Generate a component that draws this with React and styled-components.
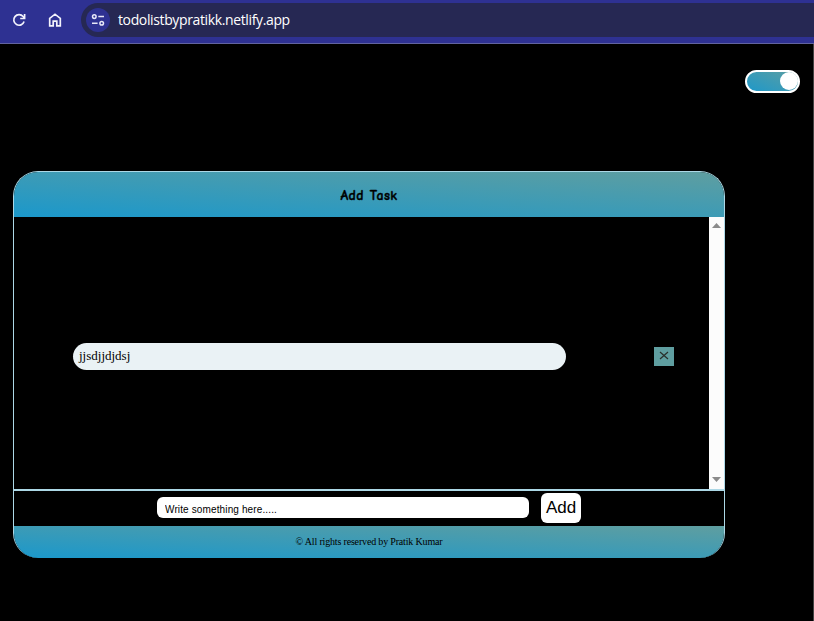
import React from "react";
import styled, { createGlobalStyle, css } from "styled-components";

const GlobalStyle = createGlobalStyle`
  * { box-sizing: border-box; }
  html, body { margin: 0; background: #000; overflow: hidden; }
`;

const gradient = css`
  background: linear-gradient(to top right, #1b98cb, #5f9ea0);
`;

const Page = styled.div`
  width: 814px;
  height: 621px;
  background: #000;
  display: flex;
  flex-direction: column;
`;

const BrowserBar = styled.header`
  height: 44px;
  flex: none;
  display: flex;
  align-items: flex-start;
  padding-top: 3px;
  background: #2e3192;
  border-bottom: 1px solid #62649f;
`;

const NavIcon = styled.svg`
  width: 16px;
  height: 16px;
  margin: 9px 0 0 ${(p) => p.$gap}px;
  flex: none;
  fill: none;
  stroke: #f3f3fc;
  stroke-width: 1.7;
`;

const AddressBar = styled.div`
  flex: 1;
  height: 34px;
  margin-left: 18px;
  padding-left: 5px;
  border-radius: 17px 0 0 17px;
  background: #262853;
  display: flex;
  align-items: center;
`;

const SiteInfo = styled.div`
  width: 24px;
  height: 24px;
  border-radius: 50%;
  background: #2e3192;
  display: flex;
  align-items: center;
  justify-content: center;
`;

const SiteIcon = styled.svg`
  width: 14px;
  height: 14px;
  fill: none;
  stroke: #e8e8f8;
  stroke-width: 1.5;
`;

const Url = styled.span`
  margin-left: 8px;
  font: 14px/20px "Open Sans", "Noto Sans", sans-serif;
  letter-spacing: -0.37px;
  color: #fff;
`;

const Viewport = styled.main`
  flex: 1;
  display: flex;
  flex-direction: column;
  padding: 26px 13px 0;
  border-right: 1px solid #434343;
`;

const Toggle = styled.div`
  ${gradient}
  align-self: flex-end;
  width: 55px;
  height: 23px;
  border: 2px solid #fff;
  border-radius: 12px;
  background-origin: border-box;
  display: flex;
  justify-content: flex-end;
`;

const Knob = styled.div`
  width: 18px;
  height: 18px;
  border-radius: 50%;
  background: #fff;
`;

const Card = styled.section`
  width: 712px;
  height: 387px;
  margin-top: 78px;
  border: 1px solid #add8e6;
  border-bottom: 0;
  border-radius: 25px;
  overflow: hidden;
  display: flex;
  flex-direction: column;
`;

const CardHeader = styled.div`
  ${gradient}
  height: 45px;
  flex: none;
  text-align: center;
  font: bold 14px/47px "Comic Sans MS", "Comic Neue", "Open Sans", sans-serif;
  letter-spacing: 0.4px;
  word-spacing: 0.5px;
  -webkit-text-stroke: 0.35px #000;
  color: #000;
`;

const List = styled.div`
  height: 274px;
  flex: none;
  display: flex;
  border-bottom: 2px solid #add8e6;
`;

const Tasks = styled.div`
  flex: 1;
  display: flex;
  flex-direction: column;
  padding: 126px 35px 0 59px;
`;

const Task = styled.div`
  display: flex;
  align-items: center;
  justify-content: space-between;
`;

const TaskText = styled.div`
  width: 493px;
  height: 27px;
  padding-left: 6px;
  border-radius: 14px;
  background: #eaf2f5;
  font: 13px/26px "Liberation Serif", serif;
  color: #000;
`;

const RemoveButton = styled.button`
  width: 20px;
  height: 19px;
  padding: 0;
  border: 0;
  background: #5f9ea0;
  display: flex;
  align-items: center;
  justify-content: center;
`;

const Cross = styled.svg`
  width: 10px;
  height: 9px;
  margin-bottom: 2px;
  stroke: #292f2b;
  stroke-width: 1.2;
`;

const Scrollbar = styled.div`
  width: 15px;
  background: #fcfcfc;
  display: flex;
  flex-direction: column;
  align-items: center;
  justify-content: space-between;
  padding: 6px 0 7px;
`;

const Arrow = styled.svg`
  width: 9px;
  height: 5px;
  fill: #8b8b8b;
`;

const EntryRow = styled.div`
  height: 35px;
  flex: none;
  display: flex;
  align-items: flex-start;
  padding: 2px 0 0 143px;
`;

const Entry = styled.input`
  width: 372px;
  height: 21px;
  margin: 4px 12px 0 0;
  padding: 4px 8px 0;
  border: 0;
  border-radius: 6px;
  background: #fff;
  font: 10px "Liberation Sans", sans-serif;
  letter-spacing: 0.13px;
  &::placeholder { color: #000; opacity: 1; }
`;

const AddButton = styled.button`
  width: 40px;
  height: 30px;
  padding: 0;
  border: 0;
  border-radius: 6px;
  background: #fff;
  color: #000;
  font: 17px/30px "Liberation Sans", sans-serif;
`;

const CardFooter = styled.footer`
  ${gradient}
  flex: 1;
  text-align: center;
  font: 10px/31px "Liberation Serif", serif;
  letter-spacing: -0.17px;
  color: #000;
`;

export default function App() {
  return (
    <Page>
      <GlobalStyle />
      <BrowserBar>
        <NavIcon $gap={11} viewBox="0 0 16 16">
          <path d="M13.1 9.6A5.3 5.3 0 1 1 12.1 4.5L13.3 5.9" />
          <path d="M13.6 2V6.5H9.2" />
        </NavIcon>
        <NavIcon $gap={20} viewBox="0 0 16 16">
          <path d="M2.7 13.8V6.3L8 2.2L13.3 6.3V13.8H9.8V9.2H6.2V13.8Z" />
        </NavIcon>
        <AddressBar>
          <SiteInfo>
            <SiteIcon viewBox="0 0 14 14">
              <circle cx="3.3" cy="3.6" r="1.8" />
              <path d="M7.3 3.6H13M1 10.2H6.6" />
              <circle cx="10.7" cy="10.2" r="1.8" />
            </SiteIcon>
          </SiteInfo>
          <Url>todolistbypratikk.netlify.app</Url>
        </AddressBar>
      </BrowserBar>
      <Viewport>
        <Toggle><Knob /></Toggle>
        <Card>
          <CardHeader>Add Task</CardHeader>
          <List>
            <Tasks>
              <Task>
                <TaskText>jjsdjjdjdsj</TaskText>
                <RemoveButton aria-label="Remove task">
                  <Cross viewBox="0 0 10 9"><path d="M1 1L9 8M9 1L1 8" /></Cross>
                </RemoveButton>
              </Task>
            </Tasks>
            <Scrollbar>
              <Arrow viewBox="0 0 9 5"><path d="M0 5L4.5 0L9 5Z" /></Arrow>
              <Arrow viewBox="0 0 9 5"><path d="M0 0L4.5 5L9 0Z" /></Arrow>
            </Scrollbar>
          </List>
          <EntryRow>
            <Entry placeholder="Write something here....." />
            <AddButton>Add</AddButton>
          </EntryRow>
          <CardFooter>© All rights reserved by Pratik Kumar</CardFooter>
        </Card>
      </Viewport>
    </Page>
  );
}
